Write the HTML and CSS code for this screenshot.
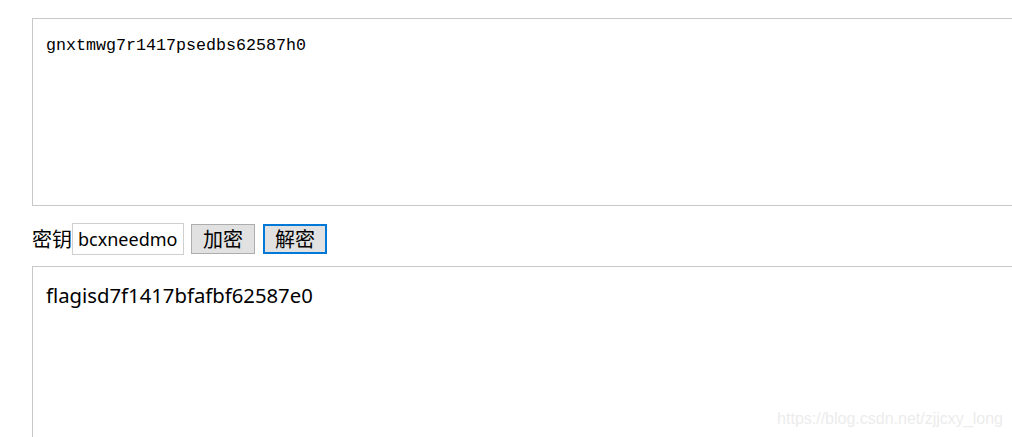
FILE: index.html
```html
<!DOCTYPE html>
<html>
<head>
<meta charset="utf-8">
<link rel="stylesheet" href="styles.css">
</head>
<body>
<div class="page">
  <textarea class="box box-cipher">gnxtmwg7r1417psedbs62587h0</textarea>
  <div class="controls">
    <label class="key-label">密钥</label>
    <input class="key-input" type="text" value="bcxneedmo">
    <button class="btn">加密</button>
    <button class="btn btn-focus">解密</button>
  </div>
  <textarea class="box box-plain">flagisd7f1417bfafbf62587e0</textarea>
</div>
<div class="watermark">https://blog.csdn.net/zjjcxy_long</div>
</body>
</html>
```
FILE: styles.css
```css
html, body {
  margin: 0;
  padding: 0;
  background: #fff;
  overflow: hidden;
  width: 1012px;
  height: 437px;
}
.page {
  padding: 18px 0 0 32px;
  display: flex;
  flex-direction: column;
  width: 980px;
  overflow: hidden;
}
.box {
  display: block;
  box-sizing: border-box;
  width: 1100px;
  flex: none;
  height: 188px;
  border: 1px solid #c8c8c8;
  margin: 0;
  resize: none;
  outline: none;
  color: #000;
  background: #fff;
}
.box-cipher {
  font-family: "Liberation Mono", monospace;
  font-size: 16.67px;
  line-height: 22px;
  padding: 16px 13px;
}
.box-plain {
  font-family: "Noto Sans", "Noto Sans CJK SC", sans-serif;
  font-size: 20.3px;
  line-height: 28px;
  padding: 14px 13px;
  height: 180px;
}
.controls {
  display: flex;
  align-items: center;
  height: 31px;
  margin: 17px 0 12px;
  font-family: "Noto Sans CJK SC", sans-serif;
  font-size: 20px;
}
.key-label {
  line-height: 31px;
}
.key-input {
  box-sizing: border-box;
  width: 112px;
  height: 32px;
  border: 1px solid #cfcfcf;
  padding: 0 4px 0 5px;
  font-family: "Noto Sans", "Noto Sans CJK SC", sans-serif;
  font-size: 18px;
  color: #000;
  outline: none;
  margin: 0;
}
.btn {
  box-sizing: border-box;
  width: 64px;
  height: 30px;
  margin: 0 0 0 7px;
  padding: 0;
  background: #e1e1e1;
  border: 1px solid #adadad;
  font-family: "Noto Sans CJK SC", sans-serif;
  font-size: 20px;
  line-height: 26px;
  color: #000;
}
.btn-focus {
  margin-left: 8px;
  border: 2px solid #0078d7;
}
.watermark {
  position: absolute;
  right: 9px;
  bottom: 9px;
  font-family: "Liberation Sans", Arial, sans-serif;
  font-size: 16px;
  color: #ececec;
}
```
